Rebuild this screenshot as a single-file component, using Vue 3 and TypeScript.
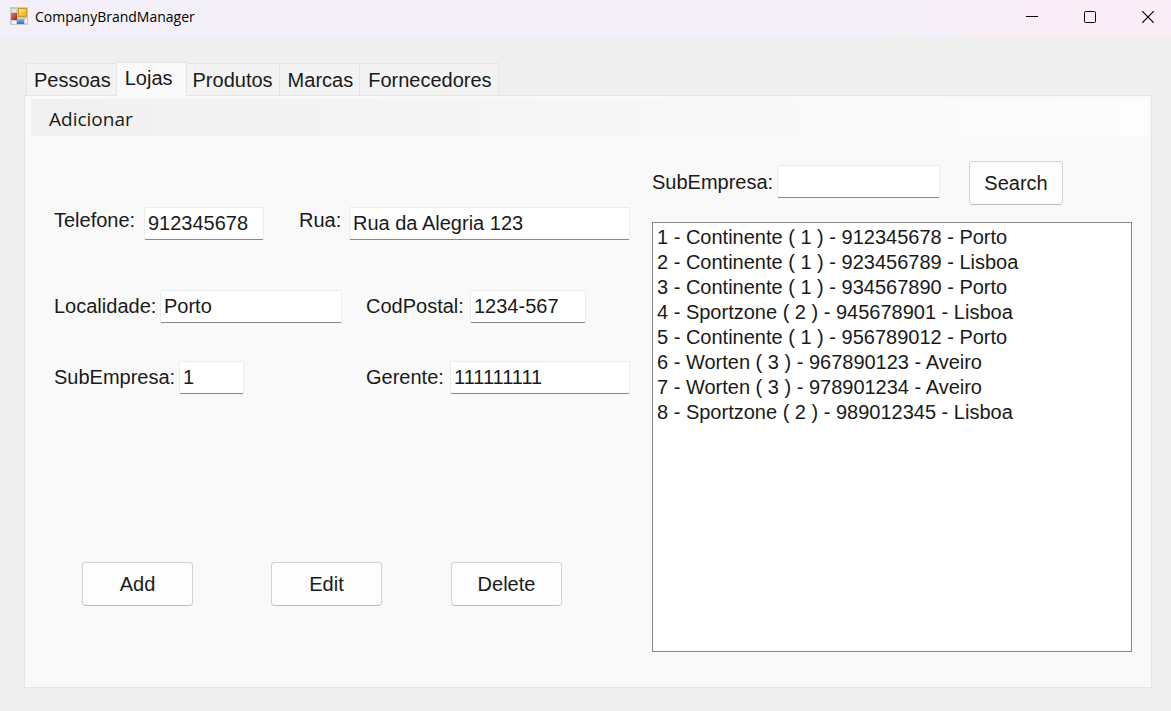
<script setup lang="ts">
import { reactive, ref } from 'vue'

interface Store {
  id: number
  brand: string
  brandId: number
  phone: string
  city: string
}

const tabs: string[] = ['Pessoas', 'Lojas', 'Produtos', 'Marcas', 'Fornecedores']
const activeTab = ref('Lojas')

const stores: Store[] = [
  { id: 1, brand: 'Continente', brandId: 1, phone: '912345678', city: 'Porto' },
  { id: 2, brand: 'Continente', brandId: 1, phone: '923456789', city: 'Lisboa' },
  { id: 3, brand: 'Continente', brandId: 1, phone: '934567890', city: 'Porto' },
  { id: 4, brand: 'Sportzone', brandId: 2, phone: '945678901', city: 'Lisboa' },
  { id: 5, brand: 'Continente', brandId: 1, phone: '956789012', city: 'Porto' },
  { id: 6, brand: 'Worten', brandId: 3, phone: '967890123', city: 'Aveiro' },
  { id: 7, brand: 'Worten', brandId: 3, phone: '978901234', city: 'Aveiro' },
  { id: 8, brand: 'Sportzone', brandId: 2, phone: '989012345', city: 'Lisboa' },
]

const form = reactive({
  telefone: '912345678',
  rua: 'Rua da Alegria 123',
  localidade: 'Porto',
  codPostal: '1234-567',
  subEmpresa: '1',
  gerente: '111111111',
})

const search = ref('')
const selected = ref<number[]>([])

function describe(s: Store): string {
  return `${s.id} - ${s.brand} ( ${s.brandId} ) - ${s.phone} - ${s.city}`
}
</script>

<template>
  <div class="window">
    <header class="titlebar">
      <svg class="app-icon" width="18" height="18" viewBox="0 0 18 18" aria-hidden="true">
        <defs>
          <linearGradient id="gold" x1="0" y1="0" x2="1" y2="1">
            <stop offset="0" stop-color="#ffe98a" />
            <stop offset="1" stop-color="#eda900" />
          </linearGradient>
          <linearGradient id="red" x1="0" y1="0" x2="1" y2="1">
            <stop offset="0" stop-color="#e08070" />
            <stop offset="1" stop-color="#a81c14" />
          </linearGradient>
          <linearGradient id="blue" x1="0" y1="0" x2="0" y2="1">
            <stop offset="0" stop-color="#86b4f4" />
            <stop offset="1" stop-color="#2f68cf" />
          </linearGradient>
        </defs>
        <rect x="0" y="0" width="18" height="18" fill="#cbcbce" />
        <rect x="2" y="2" width="4" height="3" fill="#e6e6e6" />
        <rect x="2" y="14" width="4" height="3" fill="#f4f4f4" />
        <rect x="15" y="12" width="2" height="4" fill="#f4f4f4" />
        <rect x="1" y="6" width="6" height="7" fill="url(#red)" />
        <rect x="8.5" y="1.5" width="8" height="8" fill="url(#gold)" stroke="#c99a20" />
        <rect x="7" y="12" width="7" height="5" fill="url(#blue)" />
      </svg>
      <h1 class="title">CompanyBrandManager</h1>
      <div class="controls">
        <button type="button" class="control" aria-label="Minimize">
          <svg width="12" height="12" viewBox="0 0 12 12"><path d="M0 5.5H12" stroke="#000" /></svg>
        </button>
        <button type="button" class="control" aria-label="Maximize">
          <svg width="12" height="12" viewBox="0 0 12 12">
            <rect x="0.5" y="0.5" width="11" height="11" rx="1" fill="none" stroke="#000" />
          </svg>
        </button>
        <button type="button" class="control" aria-label="Close">
          <svg width="12" height="12" viewBox="0 0 12 12">
            <path d="M0.3 0.3L11.7 11.7M11.7 0.3L0.3 11.7" stroke="#000" stroke-width="1.2" fill="none" />
          </svg>
        </button>
      </div>
    </header>

    <main class="body">
      <div class="tabs" role="tablist">
        <button
          v-for="tab in tabs"
          :key="tab"
          type="button"
          role="tab"
          class="tab"
          :class="{ active: tab === activeTab }"
          :aria-selected="tab === activeTab"
          @click="activeTab = tab"
        >
          {{ tab }}
        </button>
      </div>

      <section class="page" role="tabpanel">
        <nav class="menu">
          <button type="button" class="menu-item">Adicionar</button>
        </nav>

        <div class="content">
          <form class="form" @submit.prevent>
            <div class="row first">
              <div class="field">
                <label class="w-telefone" for="telefone">Telefone:</label>
                <input id="telefone" v-model="form.telefone" class="i-telefone" type="text" />
              </div>
              <div class="field">
                <label class="w-rua" for="rua">Rua:</label>
                <input id="rua" v-model="form.rua" class="grow" type="text" />
              </div>
            </div>
            <div class="row second">
              <div class="field">
                <label class="w-localidade" for="localidade">Localidade:</label>
                <input id="localidade" v-model="form.localidade" class="i-localidade" type="text" />
              </div>
              <div class="field">
                <label class="w-codpostal" for="codpostal">CodPostal:</label>
                <input id="codpostal" v-model="form.codPostal" class="i-codpostal" type="text" />
              </div>
            </div>
            <div class="row third">
              <div class="field">
                <label class="w-sub" for="subempresa">SubEmpresa:</label>
                <input id="subempresa" v-model="form.subEmpresa" class="i-sub" type="text" />
              </div>
              <div class="field">
                <label class="w-gerente" for="gerente">Gerente:</label>
                <input id="gerente" v-model="form.gerente" class="grow" type="text" />
              </div>
            </div>
            <div class="actions">
              <button type="button" class="btn">Add</button>
              <button type="button" class="btn">Edit</button>
              <button type="button" class="btn">Delete</button>
            </div>
          </form>

          <div class="results">
            <form class="search" @submit.prevent>
              <label class="w-sub" for="search">SubEmpresa:</label>
              <input id="search" v-model="search" class="i-search" type="text" />
              <button type="submit" class="btn btn-search">Search</button>
            </form>
            <select v-model="selected" class="list" multiple size="8" aria-label="Lojas">
              <option v-for="s in stores" :key="s.id" :value="s.id">{{ describe(s) }}</option>
            </select>
          </div>
        </div>
      </section>
    </main>
  </div>
</template>

<style>
body {
  margin: 0;
}
</style>

<style scoped>
.window {
  display: flex;
  flex-direction: column;
  min-height: 100vh;
  background: #efefef;
  color: #1a1a1a;
  font-family: 'Liberation Sans', Arial, sans-serif;
  font-size: 20px;
  line-height: 26px;
}

.window * {
  box-sizing: border-box;
}

button,
input,
select {
  margin: 0;
  font: inherit;
  color: inherit;
}

.titlebar {
  display: flex;
  align-items: center;
  height: 36px;
  padding: 0 0 2px 10px;
  background: linear-gradient(90deg, #f3f0f9 0%, #f3f0f9 70%, #faedf7 92%);
}

.app-icon {
  margin-bottom: 2px;
}

.title {
  margin: 0 0 0 7px;
  color: #000;
  font-family: 'Open Sans', 'Noto Sans', sans-serif;
  font-size: 14px;
  font-weight: 400;
  line-height: 20px;
}

.controls {
  display: flex;
  gap: 12px;
  margin-left: auto;
}

.control {
  display: grid;
  place-items: center;
  width: 46px;
  height: 34px;
  padding: 0;
  border: 0;
  background: none;
}

.body {
  display: flex;
  flex: 1;
  flex-direction: column;
  padding: 26px 19px 23px 24px;
}

.tabs {
  display: flex;
  align-items: flex-end;
  padding-left: 2px;
}

.tab {
  height: 32px;
  padding: 0 6px 0 8px;
  border: 1px solid #e5e5e5;
  border-left-width: 0;
  border-bottom: 0;
  background: #f3f3f3;
}

.tab:first-child {
  padding: 0 5px 0 7px;
  border-left-width: 1px;
}

.tab.active {
  z-index: 1;
  height: 34px;
  margin-bottom: -1px;
  padding: 0 13px 3px 8px;
  background: #f9f9f9;
}

.tab.active + .tab {
  padding: 0 6px;
}

.page {
  display: flex;
  flex: 1;
  flex-direction: column;
  border: 1px solid #e5e5e5;
  background: #f9f9f9;
}

.menu {
  display: flex;
  margin: 3px 3px 0 6px;
  background: linear-gradient(90deg, #f0f0f0, #fdfdfd);
}

.menu-item {
  height: 37px;
  padding: 2px 18px 0;
  border: 0;
  background: none;
  font-family: 'Open Sans', 'Noto Sans', sans-serif;
  font-size: 19px;
}

.content {
  display: grid;
  flex: 1;
  grid-template-columns: minmax(0, 6fr) minmax(0, 5fr);
  gap: 22px;
  padding: 25px 19px 35px 29px;
}

.form {
  display: flex;
  flex-direction: column;
  padding: 46px 0 46px;
}

.row {
  display: grid;
  grid-template-columns: 312px minmax(0, 1fr);
}

.row.first {
  grid-template-columns: 245px minmax(0, 1fr);
}

.row.second {
  margin-top: 50px;
}

.row.third {
  margin-top: 38px;
}

.field {
  display: flex;
  align-items: center;
}

.row.first label {
  align-self: flex-start;
}

label {
  flex: none;
  padding-bottom: 2px;
}

input {
  min-width: 0;
  height: 33px;
  padding: 0 3px;
  border: 1px solid #ececec;
  border-bottom-color: #868686;
  border-radius: 2px;
  outline: 0;
  background: #fff;
}

.grow {
  flex: 1;
}

.w-telefone {
  width: 90px;
}

.w-rua {
  width: 50px;
}

.w-localidade {
  width: 106px;
}

.w-codpostal {
  width: 104px;
}

.w-sub {
  width: 125px;
}

.w-gerente {
  width: 84px;
}

.i-telefone {
  width: 120px;
}

.i-localidade {
  width: 182px;
}

.i-codpostal {
  width: 116px;
}

.i-sub {
  width: 65px;
}

.i-search {
  width: 163px;
}

.actions {
  display: grid;
  grid-template-columns: 189px 180px auto;
  margin-top: auto;
  padding-left: 28px;
}

.btn {
  width: 111px;
  height: 44px;
  padding: 0;
  border: 1px solid #d2d2d2;
  border-bottom-color: #bdbdbd;
  border-radius: 4px;
  background: #fdfdfd;
}

.btn-search {
  width: 94px;
  margin-left: 29px;
}

.results {
  display: flex;
  flex-direction: column;
  gap: 17px;
}

.search {
  display: flex;
  align-items: center;
}

.search input {
  margin-bottom: 3px;
}

.list {
  flex: 1;
  width: 100%;
  padding: 3px 0;
  border: 1px solid #828790;
  border-radius: 0;
  outline: 0;
  background: #fff;
}

.list option {
  min-height: 25px;
  padding: 0 4px;
  line-height: 25px;
}
</style>
